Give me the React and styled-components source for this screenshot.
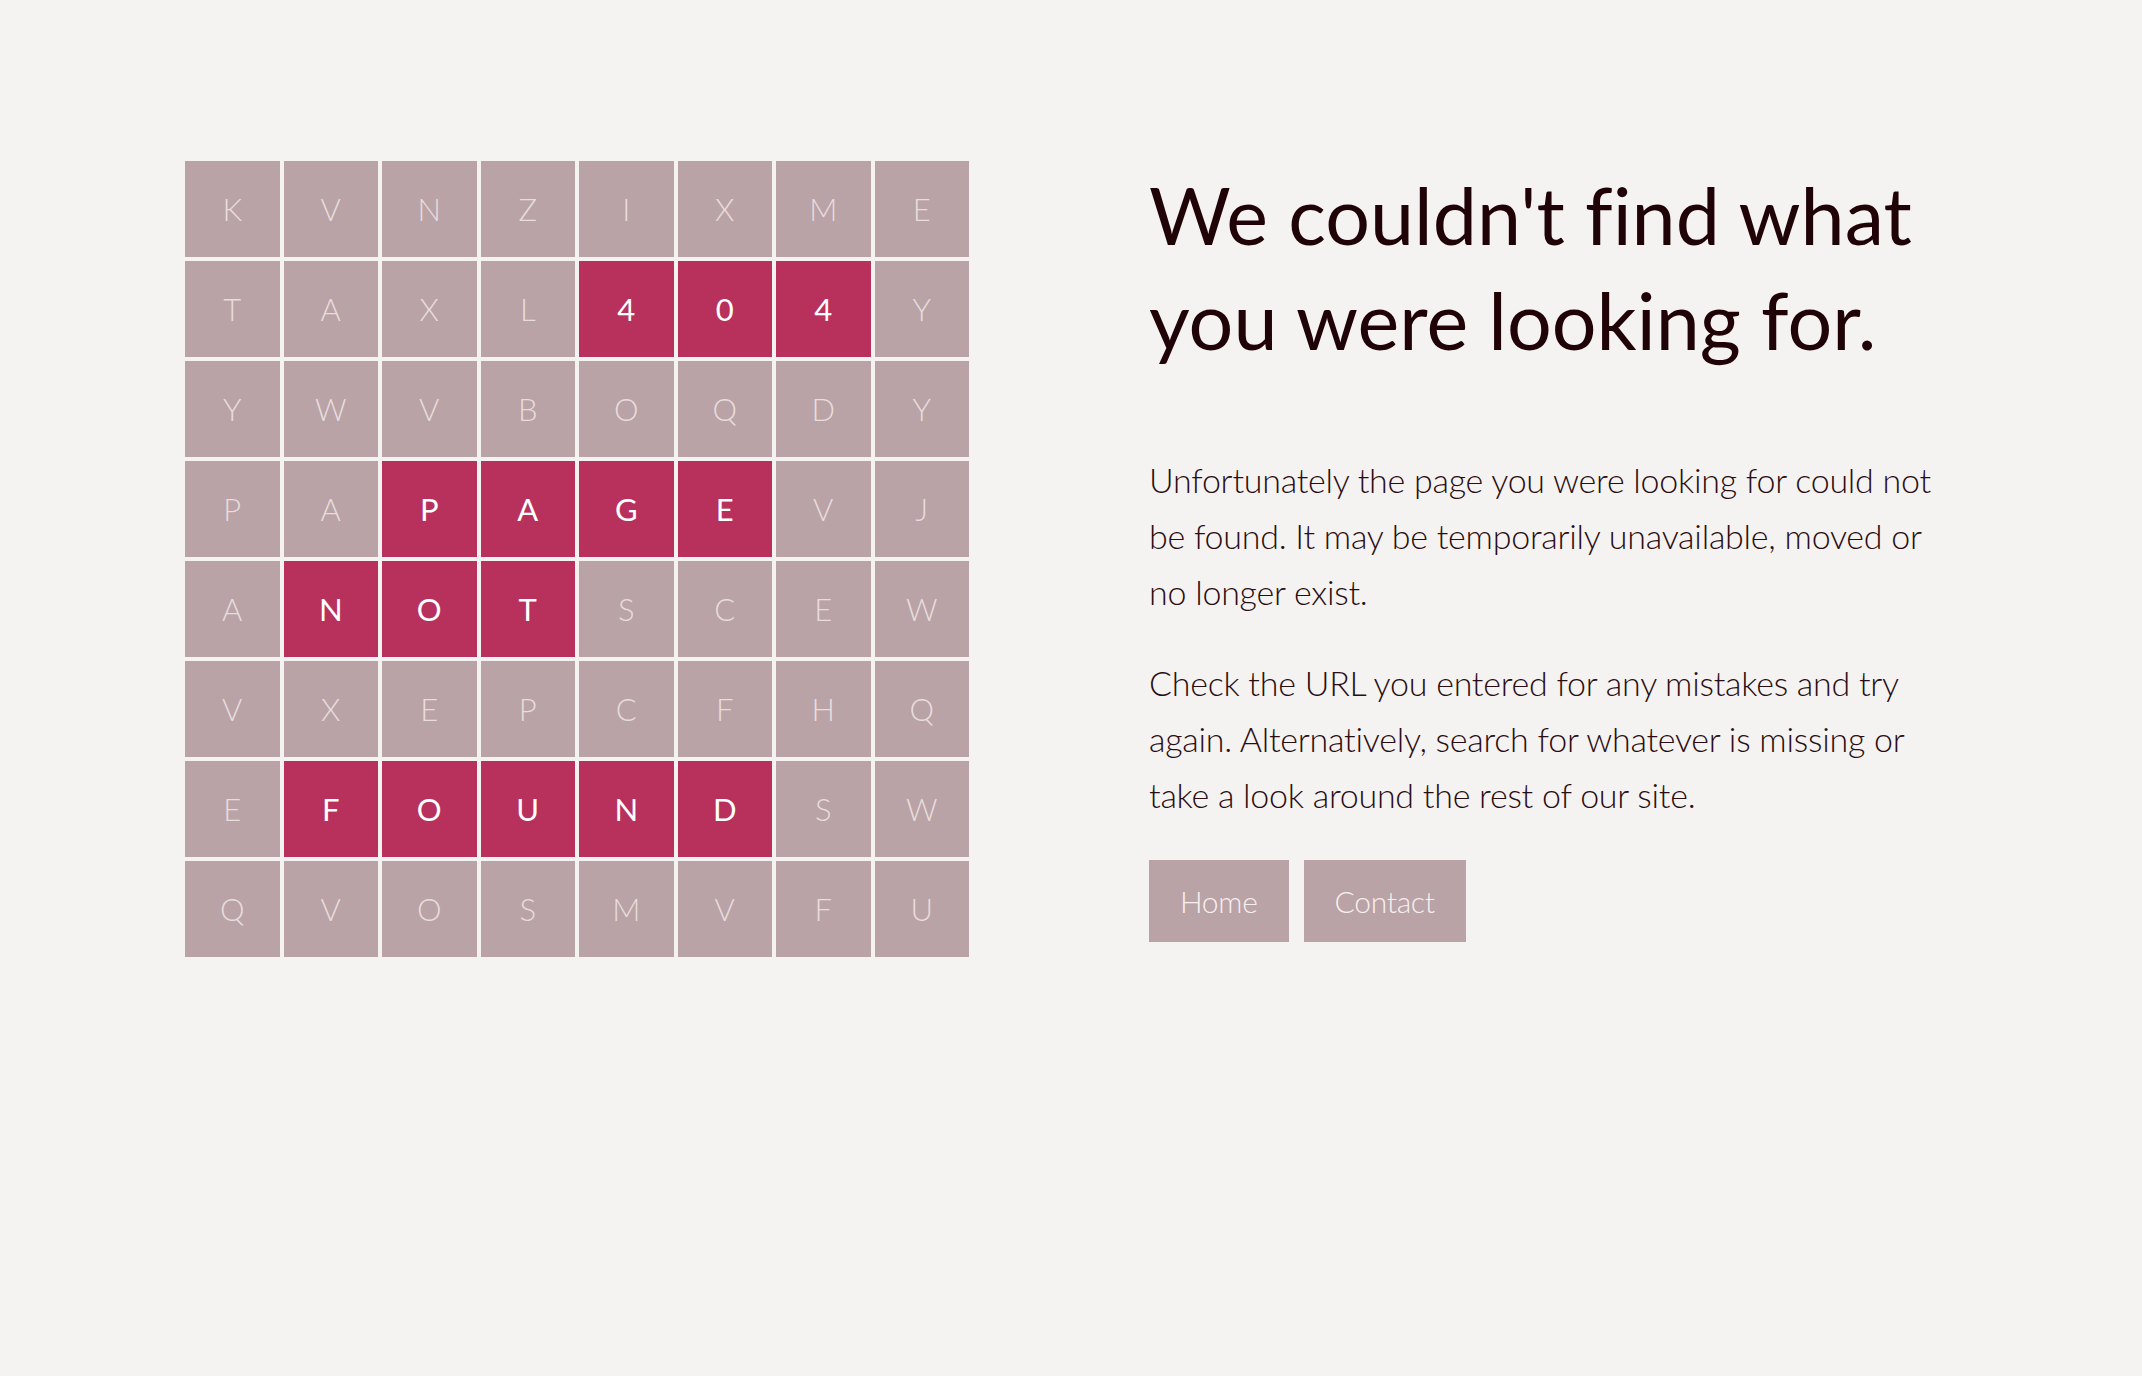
import React from "react";
import styled, { createGlobalStyle } from "styled-components";

const rows = [
  "KVNZIXME",
  "TAXL404Y",
  "YWVBOQDY",
  "PAPAGEVJ",
  "ANOTSCEW",
  "VXEPCFHQ",
  "EFOUNDSW",
  "QVOSMVFU",
];

// cells that spell the message, as "row-col"
const lit = new Set([
  "1-4", "1-5", "1-6",
  "3-2", "3-3", "3-4", "3-5",
  "4-1", "4-2", "4-3",
  "6-1", "6-2", "6-3", "6-4", "6-5",
]);

const GlobalStyle = createGlobalStyle`
  html, body {
    margin: 0;
    padding: 0;
    background: #f5f3f1;
  }
  body {
    font-family: Lato, "Open Sans", sans-serif;
    font-variant-ligatures: none;
    color: #1f0307;
    min-height: 1376px;
  }
`;

const App = () => {
  return (
    <>
      <GlobalStyle />
      <Page>
        <Grid>
          {rows.map((row, r) =>
            row.split("").map((ch, c) => (
              <Cell key={`${r}-${c}`} $lit={lit.has(`${r}-${c}`)}>
                {ch}
              </Cell>
            ))
          )}
        </Grid>
        <Content>
          <Heading>We couldn't find what you were looking for.</Heading>
          <Text>
            Unfortunately the page you were looking for could not be found. It
            may be temporarily unavailable, moved or no longer exist.
          </Text>
          <Text>
            Check the URL you entered for any mistakes and try again.
            Alternatively, search for whatever is missing or take a look around
            the rest of our site.
          </Text>
          <Actions>
            <Button href="#">Home</Button>
            <Button href="#">Contact</Button>
          </Actions>
        </Content>
      </Page>
    </>
  );
};

export default App;

const Page = styled.main`
  display: flex;
  align-items: flex-start;
  gap: 180px;
  padding: 161px 0 0 185px;
`;

const Grid = styled.div`
  display: grid;
  grid-template-columns: repeat(8, 94.5px);
  grid-auto-rows: 96px;
  gap: 4px;
  flex-shrink: 0;
`;

const Cell = styled.div`
  display: flex;
  align-items: center;
  justify-content: center;
  background: ${(p) => (p.$lit ? "#b8305c" : "#b9a3a6")};
  color: ${(p) => (p.$lit ? "#ffffff" : "#e8dcdd")};
  font-size: 31px;
  font-weight: ${(p) => (p.$lit ? 400 : 300)};
`;

const Content = styled.div`
  width: 800px;
  padding-top: 1px;
`;

const Heading = styled.h1`
  margin: 0 0 80px;
  font-size: 79px;
  line-height: 105px;
  font-weight: 400;
  color: #1f0307;
`;

const Text = styled.p`
  margin: 0 0 35px;
  font-size: 34px;
  line-height: 56px;
  letter-spacing: -0.25px;
  font-weight: 300;
  color: #2a0d12;
`;

const Actions = styled.div`
  display: flex;
  gap: 15px;
  margin-top: 37px;
`;

const Button = styled.a`
  display: inline-flex;
  align-items: center;
  height: 82px;
  padding: 0 31px;
  background: #b9a3a6;
  color: #f7efef;
  font-size: 30px;
  font-weight: 300;
  letter-spacing: -0.3px;
  text-decoration: none;
`;
